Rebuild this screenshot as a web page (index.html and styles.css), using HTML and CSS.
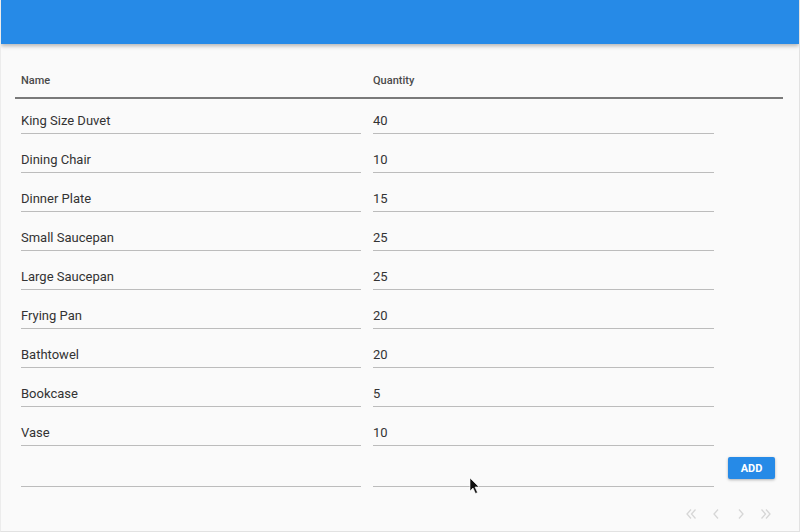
FILE: index.html
```html
<!DOCTYPE html>
<html>
<head>
<meta charset="utf-8">
<link rel="stylesheet" href="styles.css">
</head>
<body>
<div class="frame">
  <header class="appbar"></header>
  <main class="content">
    <div class="grid">
      <div class="th">Name</div>
      <div class="th">Quantity</div>
      <div class="th"></div>
      <div class="rule"></div>

      <div class="cell"><div class="field">King Size Duvet</div></div>
      <div class="cell"><div class="field">40</div></div>
      <div class="cell"></div>

      <div class="cell"><div class="field">Dining Chair</div></div>
      <div class="cell"><div class="field">10</div></div>
      <div class="cell"></div>

      <div class="cell"><div class="field">Dinner Plate</div></div>
      <div class="cell"><div class="field">15</div></div>
      <div class="cell"></div>

      <div class="cell"><div class="field">Small Saucepan</div></div>
      <div class="cell"><div class="field">25</div></div>
      <div class="cell"></div>

      <div class="cell"><div class="field">Large Saucepan</div></div>
      <div class="cell"><div class="field">25</div></div>
      <div class="cell"></div>

      <div class="cell"><div class="field">Frying Pan</div></div>
      <div class="cell"><div class="field">20</div></div>
      <div class="cell"></div>

      <div class="cell"><div class="field">Bathtowel</div></div>
      <div class="cell"><div class="field">20</div></div>
      <div class="cell"></div>

      <div class="cell"><div class="field">Bookcase</div></div>
      <div class="cell"><div class="field">5</div></div>
      <div class="cell"></div>

      <div class="cell"><div class="field">Vase</div></div>
      <div class="cell"><div class="field">10</div></div>
      <div class="cell"></div>

      <div class="cell new"><div class="field"></div></div>
      <div class="cell new"><div class="field"></div></div>
      <div class="cell new action"><button class="add">ADD</button></div>
    </div>
    <div class="pager">
      <svg class="pg pg-first" width="10" height="12" viewBox="0 0 10 12"><path d="M5 1.5 L1 6 L5 10.5 M9.5 1.5 L5.5 6 L9.5 10.5" fill="none" stroke="#d6d6d6" stroke-width="1.3"/></svg>
      <svg class="pg pg-prev" width="6" height="12" viewBox="0 0 6 12"><path d="M5 1.5 L1 6 L5 10.5" fill="none" stroke="#d6d6d6" stroke-width="1.3"/></svg>
      <svg class="pg pg-next" width="6" height="12" viewBox="0 0 6 12"><path d="M1 1.5 L5 6 L1 10.5" fill="none" stroke="#d6d6d6" stroke-width="1.3"/></svg>
      <svg class="pg pg-last" width="10" height="12" viewBox="0 0 10 12"><path d="M0.5 1.5 L4.5 6 L0.5 10.5 M5 1.5 L9 6 L5 10.5" fill="none" stroke="#d6d6d6" stroke-width="1.3"/></svg>
    </div>
  </main>
  <svg class="cursor" width="12" height="18" viewBox="0 0 12 18"><path d="M1 1 L1 14 L4 11 L6.5 16.5 L8.5 15.5 L6 10 L10 10 Z" fill="#111" stroke="#fff" stroke-width="0.6"/></svg>
</div>
</body>
</html>
```

FILE: styles.css
```css
html, body {
  margin: 0;
  padding: 0;
  background: #fafafa;
}
.frame {
  position: relative;
  border-right: 1px solid #e2e2e2;
  border-bottom: 1px solid #e2e2e2;
  border-left: 1px solid #ececec;
  box-sizing: border-box;
  width: 800px;
  height: 532px;
  overflow: hidden;
  background: #fafafa;
  font-family: Roboto, "Liberation Sans", sans-serif;
}
.appbar {
  height: 44px;
  background: #268ae7;
  box-shadow: 0 2px 4px rgba(0, 0, 0, 0.28);
  position: relative;
  z-index: 1;
}
.content {
  padding: 0 16px 0 14px;
}
.grid {
  display: grid;
  grid-template-columns: 352px 353px 63px;
}
.th {
  height: 53px;
  display: flex;
  align-items: flex-end;
  padding: 0 6px 10px;
  font-size: 11px;
  font-weight: 500;
  color: #4a4a4a;
  box-sizing: border-box;
}
.rule {
  grid-column: 1 / 4;
  height: 2px;
  background: #7a7a7a;
}
.cell {
  height: 39px;
  padding: 0 6px;
  box-sizing: border-box;
}
.field {
  height: 35px;
  box-sizing: border-box;
  border-bottom: 1px solid #bcbcbc;
  font-size: 13px;
  color: #333;
  padding-top: 14px;
  line-height: 16px;
}
.cell.new {
  height: 40px;
}
.cell.new .field {
  height: 37px;
}
.action {
  display: flex;
  align-items: flex-start;
  justify-content: flex-start;
  padding: 7px 0 0 8px;
}
.add {
  width: 47px;
  height: 22px;
  border: none;
  border-radius: 2px;
  background: #268ae7;
  color: #fff;
  font-family: Roboto, "Liberation Sans", sans-serif;
  font-weight: 700;
  font-size: 11px;
  padding: 0;
  box-shadow: 0 1px 3px rgba(0, 0, 0, 0.3);
}
.pager {
  display: flex;
  justify-content: flex-end;
  align-items: center;
  padding: 18px 12px 0 0;
}
.pager .pg {
  display: block;
}
.pg-prev {
  margin-left: 17px;
}
.pg-next {
  margin-left: 19px;
}
.pg-last {
  margin-left: 17px;
}
.cursor {
  position: absolute;
  left: 468px;
  top: 477px;
}
```
